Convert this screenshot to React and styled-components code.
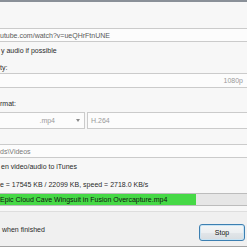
import styled, { createGlobalStyle } from "styled-components";

const GlobalStyle = createGlobalStyle`
  html, body {
    margin: 0;
    padding: 0;
    background: #f7f7f7;
  }
  body {
    font-family: "Liberation Sans", Arial, sans-serif;
    font-size: 7px;
    color: #2a2a2a;
  }
`;

const Window = styled.div`
  width: 247px;
  height: 247px;
  overflow: hidden;
  display: flex;
  flex-direction: column;
  border-top: 2px solid #8a9098;
  box-sizing: border-box;
  background: #f7f7f7;
`;

const Panel = styled.div`
  display: flex;
  flex-direction: column;
  padding-top: 26px;
`;

const Field = styled.div`
  box-sizing: border-box;
  height: ${(p) => p.$h || 14}px;
  margin-top: ${(p) => p.$mt || 0}px;
  border: 1px solid #cbcbcb;
  border-left: none;
  border-right: none;
  background: #fcfcfc;
  color: ${(p) => p.$color || "#5a5a5a"};
  display: flex;
  align-items: center;
  justify-content: ${(p) => (p.$right ? "flex-end" : "flex-start")};
  padding: 0 4px 0 0;
  white-space: nowrap;
`;

const Label = styled.div`
  height: 10px;
  line-height: 10px;
  margin-top: ${(p) => p.$mt || 0}px;
  padding-left: ${(p) => p.$pl || 0}px;
  white-space: nowrap;
`;

const FormatRow = styled.div`
  display: flex;
  gap: 2px;
  margin-top: 3px;
  height: 17px;
`;

const Combo = styled.div`
  box-sizing: border-box;
  width: 85px;
  height: 100%;
  border: 1px solid #cbcbcb;
  border-left: none;
  background: #fcfcfc;
  display: grid;
  grid-template-columns: 55px 1fr 13px;
  align-items: center;
  color: #9a9a9a;
`;

const Ext = styled.span`
  text-align: right;
`;

const Arrow = styled.span`
  justify-self: center;
  width: 0;
  height: 0;
  border-left: 2.5px solid transparent;
  border-right: 2.5px solid transparent;
  border-top: 3px solid #8a8a8a;
`;

const Codec = styled.div`
  box-sizing: border-box;
  flex: 1;
  height: 100%;
  border: 1px solid #cbcbcb;
  border-right: none;
  background: #fcfcfc;
  color: #9a9a9a;
  display: flex;
  align-items: center;
  padding-left: 3px;
`;

const Progress = styled.div`
  position: relative;
  box-sizing: border-box;
  height: 13px;
  margin-top: 3px;
  border: 1px solid #bcbcbc;
  border-left: none;
  border-right: none;
  background: #e6e6e6;
`;

const Fill = styled.div`
  height: 100%;
  background: #46d946;
`;

const ProgressText = styled.span`
  position: absolute;
  left: 0;
  top: 0;
  bottom: 0;
  display: flex;
  align-items: center;
  color: #111;
  white-space: nowrap;
`;

const Footer = styled.div`
  flex: 1;
  margin-top: 5px;
  border-top: 1px solid #dedede;
  border-bottom: 1px solid #a3a3a3;
  background: #f0f0f0;
  display: flex;
  align-items: center;
  justify-content: space-between;
  padding: 0 2px 0 2px;
`;

const StopButton = styled.button`
  box-sizing: border-box;
  width: 46px;
  height: 17px;
  margin-top: 6px;
  border: 1px solid #3c7fb1;
  border-radius: 3px;
  background: linear-gradient(#f4f6f7 0%, #eceff1 50%, #e2e6e9 51%, #d8dde1 100%);
  box-shadow: inset 0 0 0 1px #c9e4f4;
  font-family: "Liberation Sans", Arial, sans-serif;
  font-size: 7px;
  color: #111;
  padding: 0;
`;

const done = 17545;
const total = 22099;

export default function App() {
  return (
    <>
      <GlobalStyle />
      <Window>
        <Panel>
          <Field>utube.com/watch?v=ueQHrFtnUNE</Field>
          <Label $mt={4} $pl={1}>y audio if possible</Label>
          <Label $mt={7}>ty:</Label>
          <Field $h={15} $right $color="#9a9a9a">1080p</Field>
          <Label $mt={11}>rmat:</Label>
          <FormatRow>
            <Combo>
              <Ext>.mp4</Ext>
              <span />
              <Arrow />
            </Combo>
            <Codec>H.264</Codec>
          </FormatRow>
          <Field $mt={15} $color="#7a7a7a">ds\Videos</Field>
          <Label $mt={4} $pl={1}>en video/audio to iTunes</Label>
          <Label $mt={8}>e = 17545 KB / 22099 KB, speed = 2718.0 KB/s</Label>
          <Progress>
            <Fill style={{ width: `${(done / total) * 100}%` }} />
            <ProgressText>Epic Cloud Cave Wingsuit in Fusion Overcapture.mp4</ProgressText>
          </Progress>
        </Panel>
        <Footer>
          <span>when finished</span>
          <StopButton>Stop</StopButton>
        </Footer>
      </Window>
    </>
  );
}
